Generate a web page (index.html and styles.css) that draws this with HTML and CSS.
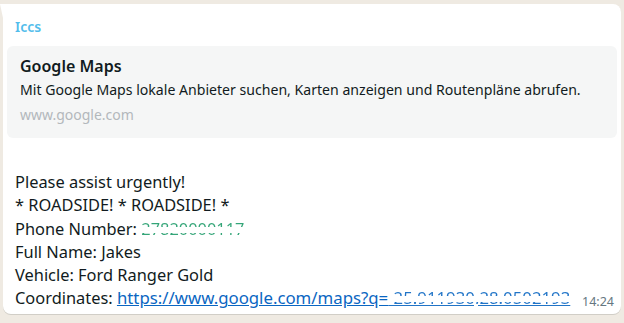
FILE: index.html
```html
<!DOCTYPE html>
<html lang="en">
  <head>
    <title>Chat message</title>
    <link rel="stylesheet" href="styles.css">
  </head>
  <body>
    <div class="chat">
      <div class="bubble">
        <div class="sender">Iccs</div>
        <div class="preview">
          <div class="preview-title">Google Maps</div>
          <div class="preview-desc">Mit Google Maps lokale Anbieter suchen, Karten anzeigen und Routenpläne abrufen.</div>
          <div class="preview-url">www.google.com</div>
        </div>
        <div class="message">
          <div>Please assist urgently!</div>
          <div>* ROADSIDE! * ROADSIDE! *</div>
          <div>Phone Number: <span class="hidden-num">27820000117</span></div>
          <div>Full Name: Jakes</div>
          <div>Vehicle: Ford Ranger Gold</div>
          <div class="last-line">
            <span>Coordinates: <a href="#" class="link">https://www.google.com/maps?q=<span class="hidden-num link-num">-25.911930,28.0502193</span></a></span>
            <span class="time">14:24</span>
          </div>
        </div>
      </div>
    </div>
  </body>
</html>
```

FILE: styles.css
```css
body {
  margin: 0;
  background: #efeae2;
  font-family: "Noto Sans", "Open Sans", sans-serif;
  color: #111b21;
}
.chat {
  padding: 4px 3px 5px 3px;
}
.bubble {
  position: relative;
  background: #ffffff;
  border-radius: 0 8px 8px 8px;
  padding: 4px;
  box-shadow: 0 1px 0.5px rgba(11, 20, 26, 0.13);
}
.bubble::before {
  content: "";
  position: absolute;
  left: -3px;
  top: 0;
  width: 3px;
  height: 14px;
  background: #ffffff;
  clip-path: polygon(0 0, 100% 0, 100% 100%);
}
.sender {
  color: #53bdeb;
  font-weight: 600;
  font-size: 14px;
  line-height: 20px;
  padding: 9px 0 0 8px;
}
.preview {
  margin-top: 9px;
  background: #f5f6f6;
  border-radius: 6px;
  padding: 8px 13px 10px 13px;
}
.preview-title {
  font-weight: 600;
  font-size: 16px;
  line-height: 24px;
}
.preview-desc {
  font-size: 14.1px;
  line-height: 24px;
}
.preview-url {
  font-size: 14px;
  line-height: 26px;
  color: #b3b8bc;
}
.message {
  padding: 32px 0 0 8px;
  font-size: 16.4px;
  line-height: 23.3px;
}
.last-line {
  display: flex;
  align-items: flex-end;
  justify-content: space-between;
}
.link {
  color: #0a66c2;
  font-size: 16.8px;
}
.hidden-num {
  background: linear-gradient(to bottom, currentColor 0 45%, transparent 45% 68%, currentColor 68% 78%, transparent 78%);
  -webkit-background-clip: text;
  background-clip: text;
  -webkit-text-fill-color: transparent;
  color: #1f9c6a;
  opacity: 0.9;
}
.link-num {
  color: #0a66c2;
}
.time {
  font-size: 12.5px;
  line-height: 16px;
  color: #667781;
  margin: 0 3px 0 0;
}
```
